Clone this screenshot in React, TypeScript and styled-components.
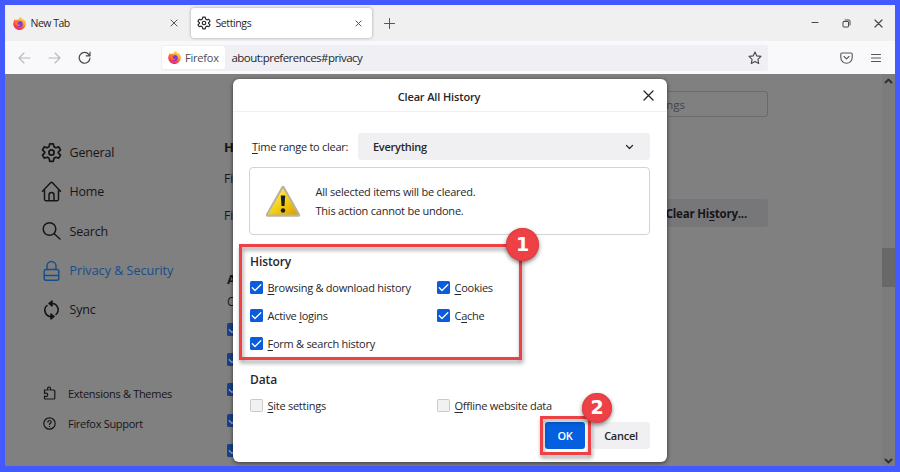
import React from "react";
import styled, { createGlobalStyle, css } from "styled-components";

const GlobalStyle = createGlobalStyle`
  *, *::before, *::after { box-sizing: border-box; }
  html, body { margin: 0; padding: 0; overflow: hidden; }
  body { font-family: "Open Sans", "Noto Sans", sans-serif; font-size: 11px; color: #27272b; }
  button { font-family: inherit; border: 0; padding: 0; }
  u { text-decoration-thickness: 1px; text-underline-offset: 1.5px; }
`;

const Frame = styled.div`
  width: 900px;
  height: 472px;
  border: 5px solid #425aff;
  border-bottom-width: 6px;
  display: flex;
  flex-direction: column;
  background: #f0f0f0;
`;

const TabBar = styled.div`
  height: 36px;
  flex: none;
  display: flex;
  align-items: center;
  background: #f0f0f0;
`;

const Tab = styled.div<{ $active?: boolean }>`
  height: 30px;
  width: ${(p) => (p.$active ? 181 : 186)}px;
  display: flex;
  align-items: center;
  padding: 0 ${(p) => (p.$active ? "10px 0 6px" : "13px 0 8px")};
  border-radius: 3px;
  font-size: 10.5px;
  letter-spacing: -0.5px;
  ${(p) => p.$active && css`background: #fff; box-shadow: 0 0 3px rgba(0, 0, 0, 0.35); letter-spacing: -0.4px;`}
  svg:last-child { color: #55555a; }
`;

const TabTitle = styled.span`
  flex: 1;
  margin-left: 4.5px;
  white-space: nowrap;
`;

const NewTabButton = styled.div`
  display: flex;
  margin-left: 12px;
  color: #55555a;
`;

const WindowControls = styled.div`
  margin-left: auto;
  margin-right: 12px;
  display: flex;
  align-items: center;
  gap: 23px;
  color: #48484c;
`;

const Toolbar = styled.div`
  height: 33px;
  flex: none;
  display: flex;
  align-items: center;
  background: #f9f9fc;
  padding: 0 14px 0 13px;
`;

const NavButtons = styled.div`
  display: flex;
  align-items: center;
  gap: 17px;
  width: 143px;
  color: #48484c;
`;

const AddressBar = styled.div`
  width: 607px;
  height: 26px;
  background: #f0f0f4;
  border-radius: 3px;
  display: flex;
  align-items: center;
  padding-right: 6px;
  svg:last-child { color: #48484c; }
`;

const Identity = styled.div`
  height: 23px;
  width: 63px;
  margin-left: 1px;
  background: #fff;
  border-radius: 3px;
  display: flex;
  align-items: center;
  gap: 4px;
  padding-left: 6px;
  color: #4c4c53;
  letter-spacing: -0.2px;
`;

const Url = styled.span`
  flex: 1;
  margin-left: 6.5px;
  font-size: 11.5px;
  letter-spacing: -0.54px;
`;

const ToolbarEnd = styled.div`
  margin-left: auto;
  display: flex;
  align-items: center;
  gap: 18px;
  color: #55555a;
`;

const Page = styled.div`
  position: relative;
  flex: 1;
  min-height: 0;
  display: flex;
  background: #808080;
  color: #161618;
`;

const Sidebar = styled.nav`
  width: 219px;
  flex: none;
  padding: 59px 0 0 36px;
`;

const Category = styled.div<{ $active?: boolean }>`
  height: 39.3px;
  display: flex;
  align-items: center;
  gap: 7.5px;
  font-size: 12.5px;
  letter-spacing: ${(p) => (p.$active ? 0.03 : -0.2)}px;
  color: ${(p) => (p.$active ? "#164d8b" : "#161618")};
  svg { width: 21px; }
`;

const FooterLinks = styled.div`
  margin-top: 49px;
`;

const FooterLink = styled.div`
  height: 30px;
  display: flex;
  align-items: center;
  gap: 12.5px;
  padding-left: 1.5px;
  font-size: 11px;
  letter-spacing: -0.3px;
`;

const Preferences = styled.main`
  width: 544px;
  flex: none;
  display: flex;
  flex-direction: column;
  padding-top: 17px;
`;

const SearchField = styled.div`
  align-self: flex-end;
  width: 190px;
  height: 26px;
  border: 1px solid #6a6a6c;
  border-radius: 3px;
  display: flex;
  align-items: center;
  justify-content: flex-end;
  padding-right: 82px;
  color: #444448;
  font-size: 11.5px;
`;

const SectionTitle = styled.div<{ $top: number; $indent?: number }>`
  margin-top: ${(p) => p.$top}px;
  padding-left: ${(p) => p.$indent ?? 0}px;
  height: 20px;
  line-height: 20px;
  font-size: 13px;
  font-weight: 700;
`;

const PrefRow = styled.div<{ $height: number; $indent?: number }>`
  height: ${(p) => p.$height}px;
  padding-left: ${(p) => p.$indent ?? 0}px;
  display: flex;
  align-items: center;
  justify-content: space-between;
  font-size: 12px;
`;

const ClearHistoryButton = styled.div`
  width: 124px;
  height: 28px;
  margin-top: -4px;
  border-radius: 3px;
  background: #77777a;
  display: flex;
  align-items: center;
  justify-content: flex-end;
  padding-right: 21px;
  font-size: 11.5px;
  font-weight: 700;
  letter-spacing: -0.2px;
`;

const Scrollbar = styled.div`
  width: 13px;
  margin-left: auto;
  background: #7c7c7c;
  color: #303032;
  display: flex;
  flex-direction: column;
  align-items: center;
  justify-content: space-between;
  padding: 4px 0 2px;
`;

const ScrollThumb = styled.div`
  width: 13px;
  height: 39px;
  background: #686868;
  margin-top: -8px;
`;

const Dialog = styled.section`
  position: absolute;
  left: 228px;
  top: 5px;
  width: 434px;
  height: 383px;
  background: #fff;
  color: #27272b;
  border-radius: 6px;
  box-shadow: 0 1px 4px rgba(0, 0, 0, 0.6);
  display: flex;
  flex-direction: column;
`;

const DialogHeader = styled.header`
  height: 33px;
  flex: none;
  border-bottom: 1px solid #f0f0f2;
  display: grid;
  grid-template-columns: 36px 1fr 38px;
  align-items: center;
  justify-items: center;
  font-size: 11px;
  font-weight: 600;
  letter-spacing: -0.14px;
`;

const DialogTitle = styled.span`
  grid-column: 2;
  margin-right: 20px;
  padding-top: 2px;
`;

const RangeRow = styled.div`
  margin: 21px 17px 0 19px;
  height: 27px;
  display: flex;
  align-items: center;
  justify-content: space-between;
  letter-spacing: -0.27px;
`;

const RangeSelect = styled.div`
  width: 292px;
  height: 27px;
  border-radius: 3px;
  background: #f0f0f2;
  display: flex;
  align-items: center;
  justify-content: space-between;
  padding: 0 16px 0 15px;
  font-size: 11px;
  font-weight: 600;
`;

const Warning = styled.div`
  margin: 7px 17px 0 16px;
  height: 68px;
  flex: none;
  border: 1px solid #d3d3d6;
  border-radius: 4px;
  display: flex;
  align-items: center;
  gap: 14.5px;
  padding-left: 15px;
`;

const WarningText = styled.div`
  line-height: 19.5px;
  letter-spacing: -0.23px;
`;

const Group = styled.div<{ $top: number }>`
  position: relative;
  margin: ${(p) => p.$top}px 0 0 17px;
`;

const GroupTitle = styled.div`
  height: 20px;
  line-height: 20px;
  font-size: 12px;
  font-weight: 600;
  letter-spacing: -0.1px;
`;

const OptionGrid = styled.div`
  display: grid;
  grid-template-columns: 187px 1fr;
  grid-auto-rows: 28px;
  padding-top: 1px;
`;

const Option = styled.div`
  display: flex;
  align-items: center;
  gap: 4.5px;
  letter-spacing: -0.26px;
  white-space: nowrap;
`;

const Box = styled.span<{ $checked?: boolean; $dim?: boolean }>`
  width: 13px;
  height: 13px;
  flex: none;
  display: flex;
  border-radius: 1.5px;
  opacity: ${(p) => (p.$dim ? 0.9 : 1)};
  background: ${(p) => (p.$dim ? "#0b3b8c" : p.$checked ? "#0a5cdc" : "#f1f1f1")};
  border: ${(p) => (p.$checked ? "0" : "1px solid #c9c9c9")};
`;

const Actions = styled.div`
  display: flex;
  justify-content: flex-end;
  gap: 7px;
  margin: 3px 17px 0 0;
`;

const ActionSlot = styled.div`
  position: relative;
`;

const ActionButton = styled.button<{ $primary?: boolean }>`
  display: block;
  width: ${(p) => (p.$primary ? 40 : 58)}px;
  height: 27px;
  border-radius: 3px;
  font-size: 11px;
  font-weight: 600;
  letter-spacing: -0.25px;
  color: ${(p) => (p.$primary ? "#fff" : "#27272b")};
  background: ${(p) => (p.$primary ? "#0560df" : "#f0f0f2")};
`;

const Highlight = styled.div<{ $box: [number, number, number, number] }>`
  position: absolute;
  left: ${(p) => p.$box[0]}px;
  top: ${(p) => p.$box[1]}px;
  width: ${(p) => p.$box[2]}px;
  height: ${(p) => p.$box[3]}px;
  border: 3px solid #ee4145;
  filter: drop-shadow(1px 3px 2px rgba(0, 0, 0, 0.4));
  pointer-events: none;
`;

const StepBadge = styled.div<{ $size: number; $x: number; $y: number }>`
  position: absolute;
  left: ${(p) => p.$x}px;
  top: ${(p) => p.$y}px;
  width: ${(p) => p.$size}px;
  height: ${(p) => p.$size}px;
  border-radius: 50%;
  background: #ee4145;
  box-shadow: 0 2px 4px rgba(0, 0, 0, 0.5), inset 0 0 2px #c82f35;
  color: #fff;
  font-family: "DejaVu Sans", sans-serif;
  font-size: 19px;
  font-weight: 700;
  line-height: ${(p) => p.$size - 1}px;
  text-align: center;
`;

const line = { fill: "none", stroke: "currentColor", strokeLinecap: "round", strokeLinejoin: "round" } as const;

const FirefoxLogo = ({ id }: { id: string }) => (
  <svg width="13" height="13" viewBox="0 0 26 26">
    <defs>
      <linearGradient id={id} x1="0.8" y1="0" x2="0.25" y2="1">
        <stop offset="0" stopColor="#ffe34a" />
        <stop offset="0.4" stopColor="#ffa02c" />
        <stop offset="0.7" stopColor="#ff4545" />
        <stop offset="1" stopColor="#ed2468" />
      </linearGradient>
    </defs>
    <path d="M15 0c3 2 4 4 4.300 6 1-.6 1-1.500 1-2.400C24 6.500 26 10 25.500 14.500 25 21 19.500 26 13 26S.5 20.500.5 14C.5 9.500 2 6 4 3.500c.2 1.500.7 2.300 1.400 3C7.500 5 9.500 5 11 5.500 11.500 3 13 1.500 15 0z" fill={`url(#${id})`} />
    <circle cx="13.500" cy="14" r="6" fill="#7a3ae0" />
    <path d="M5.500 7c3-.8 5.500 0 7.500 2.300-2 .3-2.600 1.600-4 2.200.5 3.500 3 5.200 6.500 3.500-1 4-9 4.500-11-1.500-.7-2.500 0-5 1-6.500z" fill="#ff7139" />
  </svg>
);

// Six-toothed gear, shared by the tab and the sidebar
const Gear = ({ size }: { size: number }) => (
  <svg width={size} height={size} viewBox="0 0 24 24" {...line} strokeWidth="2">
    <path d="M10 2h4l.8 3.300 2.200 1.300 3.300-1 2 3.500L19.800 11.500v1L22.300 15l-2 3.400-3.300-1-2.200 1.300L14 22h-4l-.8-3.300L7 17.400l-3.300 1-2-3.400 2.500-2.500v-1L1.700 9.100l2-3.500 3.300 1 2.200-1.300z" />
    <circle cx="12" cy="12" r="3" />
  </svg>
);

const Cross = ({ size, weight = 1 }: { size: number; weight?: number }) => (
  <svg width={size} height={size} viewBox={`0 0 ${size} ${size}`} {...line} strokeWidth={weight}>
    <path d={`M1 1L${size - 1} ${size - 1}M${size - 1} 1L1 ${size - 1}`} />
  </svg>
);

const Arrow = ({ back }: { back?: boolean }) => (
  <svg width="13" height="12" viewBox="0 0 13 12" {...line} stroke="#b8b8bc" strokeWidth="1.100">
    <path d={back ? "M12 6H1M6 1L1 6l5 5" : "M1 6h11M7 1l5 5-5 5"} />
  </svg>
);

const Chevron = ({ up, weight = 1.2 }: { up?: boolean; weight?: number }) => (
  <svg width="9" height="6" viewBox="0 0 9 6" {...line} strokeWidth={weight}>
    <path d={up ? "M1.500 4.500l3-3 3 3" : "M1.500 1.500l3 3 3-3"} />
  </svg>
);

const Check = () => (
  <svg width="13" height="13" viewBox="0 0 13 13" {...line} stroke="#fff" strokeWidth="1.300">
    <path d="M2.300 6.800l2.700 2.700L10.800 3.700" />
  </svg>
);

const DimCheck = styled.span`
  display: flex;
  opacity: 0.55;
`;

const HomeIcon = () => (
  <svg width="20" height="21" viewBox="0 0 20 21" {...line} strokeWidth="1.500">
    <path d="M1 10.200L9.300 1.600q.7-.6 1.400 0L19 10.200M3 9v9.300q0 1.400 1.400 1.400h11.200q1.400 0 1.400-1.400V9M7.500 19.500V14q0-2.500 2.500-2.500t2.500 2.500v5.500" />
  </svg>
);

const SearchIcon = () => (
  <svg width="20" height="20" viewBox="0 0 20 20" {...line} strokeWidth="1.500">
    <circle cx="8" cy="8" r="6.300" />
    <path d="M12.700 12.700l5.800 5.300" />
  </svg>
);

const LockIcon = () => (
  <svg width="20" height="22" viewBox="0 0 20 22" {...line} strokeWidth="1.400">
    <rect x="2.700" y="9.500" width="14.600" height="10.800" rx="1.800" />
    <path d="M5.500 9.500V6a4.500 4.500 0 0 1 9 0v3.500M3 15.500h14" />
  </svg>
);

const SyncIcon = () => (
  <svg width="20" height="20" viewBox="0 0 20 20" {...line} strokeWidth="1.600">
    <path d="M8.500 3.500H10a6.300 6.300 0 0 1 4.500 11M11.500 16.500H10a6.300 6.300 0 0 1-4.500-11" />
    <path d="M10.500 1v5L7.500 3.500zM9.500 14v5l3-2.500z" fill="currentColor" />
  </svg>
);

const PuzzleIcon = () => (
  <svg width="13" height="14" viewBox="0 0 13 14" {...line} strokeWidth="1.200">
    <path d="M1.500 4h3.700C4 2 4.800 1 6 1s2.200 1 1 3h3.800q1 0 1 1v7q0 1-1 1H2.500q-1 0-1-1v-2c2 1 3.200.3 3.200-1.100S3.500 6.600 1.500 7.500z" />
  </svg>
);

const HelpIcon = () => (
  <svg width="13" height="13" viewBox="0 0 13 13" {...line} strokeWidth="1.200">
    <circle cx="6.500" cy="6.500" r="5.700" />
    <path d="M4.900 5.200c0-2.300 3.300-2.200 3.300-.1 0 1.200-1.700 1.200-1.700 2.400M6.500 9.300v.2" />
  </svg>
);

const WarningIcon = () => (
  <svg width="36" height="32" viewBox="0 0 36 32">
    <defs>
      <linearGradient id="warn" x1="0" y1="0" x2="1" y2="1">
        <stop offset="0.200" stopColor="#ffe94d" />
        <stop offset="0.550" stopColor="#f2cd12" />
        <stop offset="1" stopColor="#d99c08" />
      </linearGradient>
    </defs>
    <path d="M18 2.500L33.500 30h-31z" fill="url(#warn)" stroke="#b9b3a0" strokeWidth="3.500" strokeLinejoin="round" />
    <path d="M18 3.500L33 29.500H3z" fill="url(#warn)" />
    <path d="M15.800 10.500h4.400l-.7 10.500h-3z" fill="#1c1c1c" />
    <circle cx="18" cy="25.500" r="2.200" fill="#1c1c1c" />
  </svg>
);

type OptionData = { before?: string; key: string; after: string; checked?: boolean };

const historyOptions: OptionData[] = [
  { key: "B", after: "rowsing & download history", checked: true },
  { key: "C", after: "ookies", checked: true },
  { before: "Active ", key: "l", after: "ogins", checked: true },
  { before: "C", key: "a", after: "che", checked: true },
  { key: "F", after: "orm & search history", checked: true },
];

const dataOptions: OptionData[] = [
  { key: "S", after: "ite settings" },
  { key: "O", after: "ffline website data" },
];

const Options = ({ items }: { items: OptionData[] }) => (
  <OptionGrid>
    {items.map((o) => (
      <Option key={o.key + o.after}>
        <Box $checked={o.checked}>{o.checked && <Check />}</Box>
        <span>{o.before}<u>{o.key}</u>{o.after}</span>
      </Option>
    ))}
  </OptionGrid>
);

export default function App() {
  return (
    <Frame>
      <GlobalStyle />
      <TabBar>
        <Tab>
          <FirefoxLogo id="foxTab" />
          <TabTitle>New Tab</TabTitle>
          <Cross size={8} />
        </Tab>
        <Tab $active>
          <Gear size={14} />
          <TabTitle>Settings</TabTitle>
          <Cross size={7} />
        </Tab>
        <NewTabButton>
          <svg width="11" height="11" viewBox="0 0 11 11" {...line}><path d="M5.500.5v10M.5 5.500h10" /></svg>
        </NewTabButton>
        <WindowControls>
          <svg width="8" height="8" viewBox="0 0 8 8" {...line}><path d="M1 3.500h6" /></svg>
          <svg width="9" height="9" viewBox="0 0 9 9" {...line}><rect x="1" y="2.500" width="5.500" height="5.500" rx=".5" /><path d="M3 1h4q1 0 1 1v4" /></svg>
          <Cross size={9} weight={1.2} />
        </WindowControls>
      </TabBar>

      <Toolbar>
        <NavButtons>
          <Arrow back />
          <Arrow />
          <svg width="13" height="13" viewBox="0 0 13 13" {...line} strokeWidth="1.200"><path d="M11.200 4A5.400 5.400 0 1 0 12 7M12 1v3.800H8.200" /></svg>
        </NavButtons>
        <AddressBar>
          <Identity><FirefoxLogo id="foxUrl" />Firefox</Identity>
          <Url>about:preferences#privacy</Url>
          <svg width="14" height="14" viewBox="0 0 14 14" {...line} strokeWidth="1.100"><path d="M7 1l1.800 3.900 4.200.5-3.100 2.900.8 4.200L7 10.400l-3.700 2.100.8-4.200L1 5.400l4.200-.5z" /></svg>
        </AddressBar>
        <ToolbarEnd>
          <svg width="13" height="12" viewBox="0 0 13 12" {...line} strokeWidth="1.100"><path d="M2 1h9q1.200 0 1.200 1.200V5.500a5.700 5.700 0 0 1-11.400 0V2.200Q.8 1 2 1zM4 4.500l2.500 2.400L9 4.500" /></svg>
          <svg width="10" height="10" viewBox="0 0 10 10" {...line} strokeWidth="1.100"><path d="M.5 1.500h9M.5 5h9M.5 8.500h9" /></svg>
        </ToolbarEnd>
      </Toolbar>

      <Page>
        <Sidebar>
          <Category><Gear size={21} />General</Category>
          <Category><HomeIcon />Home</Category>
          <Category><SearchIcon />Search</Category>
          <Category $active><LockIcon />Privacy &amp; Security</Category>
          <Category><SyncIcon />Sync</Category>
          <FooterLinks>
            <FooterLink><PuzzleIcon />Extensions &amp; Themes</FooterLink>
            <FooterLink><HelpIcon />Firefox Support</FooterLink>
          </FooterLinks>
        </Sidebar>

        <Preferences>
          <SearchField>Find in Settings</SearchField>
          <SectionTitle $top={20}>History</SectionTitle>
          <PrefRow $height={42}>Firefox will</PrefRow>
          <PrefRow $height={32}>
            Firefox will
            <ClearHistoryButton>Clear Hi<u>s</u>tory...</ClearHistoryButton>
          </PrefRow>
          <SectionTitle $top={38} $indent={3}>Address Bar</SectionTitle>
          <PrefRow $height={25} $indent={3}>Choose</PrefRow>
          {[0, 1, 2, 3, 4].map((i) => (
            <PrefRow key={i} $height={30.3} $indent={3}>
              <Box $checked $dim><DimCheck><Check /></DimCheck></Box>
            </PrefRow>
          ))}
        </Preferences>

        <Scrollbar>
          <Chevron up weight={2} />
          <ScrollThumb />
          <Chevron weight={2} />
        </Scrollbar>

        <Dialog>
          <DialogHeader>
            <DialogTitle>Clear All History</DialogTitle>
            <Cross size={11} weight={1.3} />
          </DialogHeader>
          <RangeRow>
            <span><u>T</u>ime range to clear:</span>
            <RangeSelect>Everything<Chevron /></RangeSelect>
          </RangeRow>
          <Warning>
            <WarningIcon />
            <WarningText>
              All selected items will be cleared.<br />
              This action cannot be undone.
            </WarningText>
          </Warning>
          <Group $top={17}>
            <GroupTitle>History</GroupTitle>
            <Options items={historyOptions} />
            <Highlight $box={[-11, -8, 283, 116]} />
            <StepBadge $size={33} $x={256} $y={-24}>1</StepBadge>
          </Group>
          <Group $top={13}>
            <GroupTitle>Data</GroupTitle>
            <Options items={dataOptions} />
          </Group>
          <Actions>
            <ActionSlot>
              <ActionButton $primary>OK</ActionButton>
              <Highlight $box={[-5, -6, 51, 39]} />
              <StepBadge $size={30} $x={37} $y={-29}>2</StepBadge>
            </ActionSlot>
            <ActionButton>Cancel</ActionButton>
          </Actions>
        </Dialog>
      </Page>
    </Frame>
  );
}
